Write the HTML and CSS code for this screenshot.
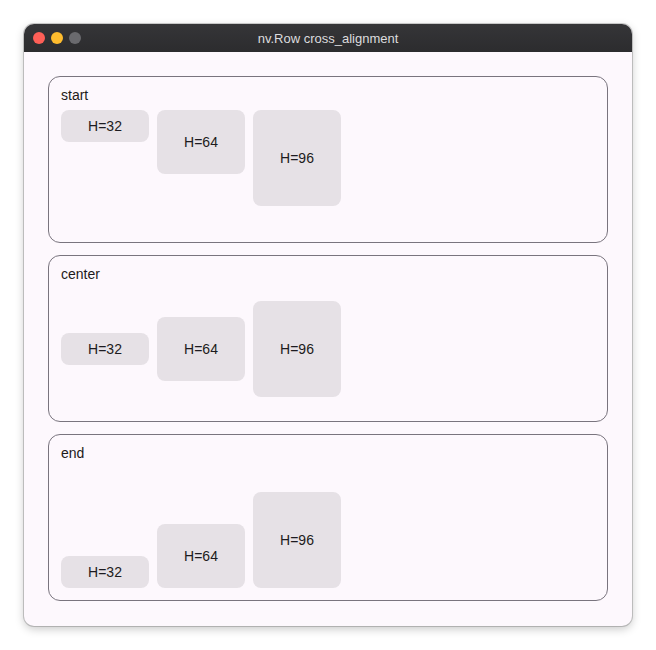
FILE: index.html
```html
<!DOCTYPE html>
<html>
<head>
<meta charset="utf-8">
<link rel="stylesheet" href="styles.css">
</head>
<body>
<div class="window">
  <div class="titlebar">
    <div class="lights">
      <span class="light red"></span>
      <span class="light yellow"></span>
      <span class="light gray"></span>
    </div>
    <div class="title">nv.Row cross_alignment</div>
  </div>
  <div class="content">
    <section class="card">
      <div class="label">start</div>
      <div class="row align-start">
        <div class="box h32">H=32</div>
        <div class="box h64">H=64</div>
        <div class="box h96">H=96</div>
      </div>
    </section>
    <section class="card">
      <div class="label">center</div>
      <div class="row align-center">
        <div class="box h32">H=32</div>
        <div class="box h64">H=64</div>
        <div class="box h96">H=96</div>
      </div>
    </section>
    <section class="card">
      <div class="label">end</div>
      <div class="row align-end">
        <div class="box h32">H=32</div>
        <div class="box h64">H=64</div>
        <div class="box h96">H=96</div>
      </div>
    </section>
  </div>
</div>
</body>
</html>
```

FILE: styles.css
```css
html, body {
  margin: 0;
  padding: 0;
  background: #ffffff;
}
body {
  width: 656px;
  height: 650px;
  padding: 24px;
  box-sizing: border-box;
  font-family: "Liberation Sans", Arial, sans-serif;
}
.window {
  width: 608px;
  height: 602px;
  border-radius: 10px;
  overflow: hidden;
  background: #fdf8fd;
  box-shadow: 0 0 0 1px rgba(0,0,0,0.18), 0 3px 10px rgba(0,0,0,0.22);
  display: flex;
  flex-direction: column;
}
.titlebar {
  height: 28px;
  flex: none;
  background: linear-gradient(#353538, #2c2c2e);
  position: relative;
  display: flex;
  align-items: center;
  justify-content: center;
}
.lights {
  position: absolute;
  left: 9px;
  top: 8px;
  display: flex;
  gap: 6px;
}
.light {
  width: 12px;
  height: 12px;
  border-radius: 50%;
  display: block;
}
.red { background: #fe5f57; }
.yellow { background: #febc2e; }
.gray { background: #6a6a6e; }
.title {
  color: #dcdcde;
  font-size: 13px;
  font-weight: normal;
}
.content {
  padding: 24px 24px 24px;
  display: flex;
  flex-direction: column;
  gap: 12px;
}
.card {
  border: 1px solid #79747e;
  border-radius: 12px;
  padding: 12px;
  display: flex;
  flex-direction: column;
  gap: 8px;
}
.label {
  font-size: 14px;
  line-height: 13px;
  color: #1d1b20;
}
.row {
  height: 120px;
  display: flex;
  gap: 8px;
}
.align-start { align-items: flex-start; }
.align-center { align-items: center; }
.align-end { align-items: flex-end; }
.box {
  width: 88px;
  background: #e6e1e6;
  border-radius: 8px;
  display: flex;
  align-items: center;
  justify-content: center;
  font-size: 14px;
  color: #1d1b20;
}
.h32 { height: 32px; }
.h64 { height: 64px; }
.h96 { height: 96px; }
```
